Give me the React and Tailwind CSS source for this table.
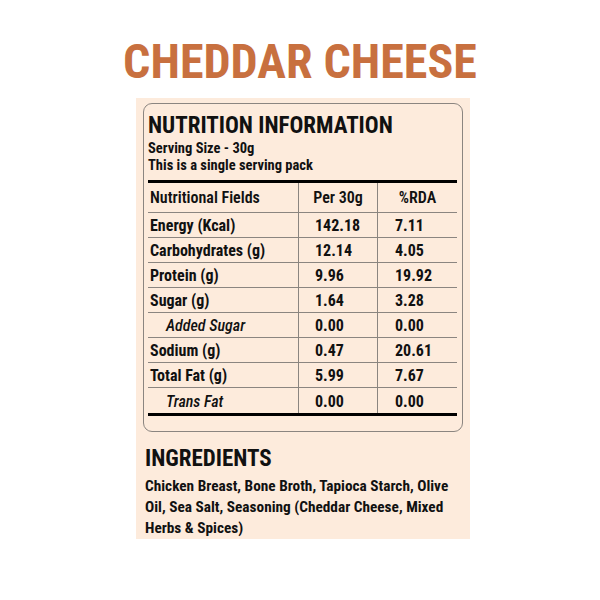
export default function App() {
  const font = { fontFamily: '"Roboto Condensed", "Liberation Sans Narrow", "DejaVu Sans Condensed", "Roboto", sans-serif' };
  const rows = [
    ["Energy (Kcal)", "142.18", "7.11"],
    ["Carbohydrates (g)", "12.14", "4.05"],
    ["Protein (g)", "9.96", "19.92"],
    ["Sugar (g)", "1.64", "3.28"],
    ["Added Sugar", "0.00", "0.00", true],
    ["Sodium (g)", "0.47", "20.61"],
    ["Total Fat (g)", "5.99", "7.67"],
    ["Trans Fat", "0.00", "0.00", true],
  ];
  return (
    <div className="w-[600px] h-[600px] bg-white text-[#111]" style={font}>
      <div className="pt-[36px] h-[98px] text-center text-[48px] leading-[52px] font-bold text-[#c8703f]">
        CHEDDAR CHEESE
      </div>
      <div className="ml-[136px] w-[334px] h-[441px] bg-[#fdebdc] pt-[5px] px-[7px]">
        <div className="h-[329px] border border-[#8b8580] rounded-[9px] pl-[4px] pr-[5px] pt-[9px]">
          <div className="text-[23px] leading-[26px] font-bold">NUTRITION INFORMATION</div>
          <div className="text-[14.5px] leading-[17px] font-bold mt-[1px]">Serving Size - 30g</div>
          <div className="text-[14.5px] leading-[17px] font-bold">This is a single serving pack</div>
          <div className="mt-[6px] border-t-[3px] border-black border-b-[3px]">
            <div className="flex h-[30px] border-b border-[#8b8580] text-[16px] font-semibold">
              <div className="w-[150px] flex items-center pl-[2px] pt-[1px]">Nutritional Fields</div>
              <div className="w-[79px] border-l border-[#8b8580] flex items-center justify-center pt-[1px]">Per 30g</div>
              <div className="flex-1 border-l border-[#8b8580] flex items-center justify-center pt-[1px]">%RDA</div>
            </div>
            {rows.map((r, i) => (
              <div key={i} className={"flex h-[25px] text-[16px] " + (i < rows.length - 1 ? "border-b border-[#8b8580]" : "")}>
                <div className={"w-[150px] flex items-center pt-[2px] " + (r[3] ? "pl-[18px] italic font-medium" : "pl-[2px] font-bold")}>{r[0]}</div>
                <div className="w-[79px] border-l border-[#8b8580] flex items-center pt-[2px] pl-[16px] font-bold">{r[1]}</div>
                <div className="flex-1 border-l border-[#8b8580] flex items-center pt-[2px] pl-[17px] font-bold">{r[2]}</div>
              </div>
            ))}
          </div>
        </div>
        <div className="pl-[2px] pt-[13px]">
          <div className="text-[23px] leading-[28px] font-bold">INGREDIENTS</div>
          <div className="text-[15.3px] leading-[21px] font-bold mt-[3px]">
            Chicken Breast, Bone Broth, Tapioca Starch, Olive Oil, Sea Salt, Seasoning (Cheddar Cheese, Mixed Herbs &amp; Spices)
          </div>
        </div>
      </div>
    </div>
  );
}
